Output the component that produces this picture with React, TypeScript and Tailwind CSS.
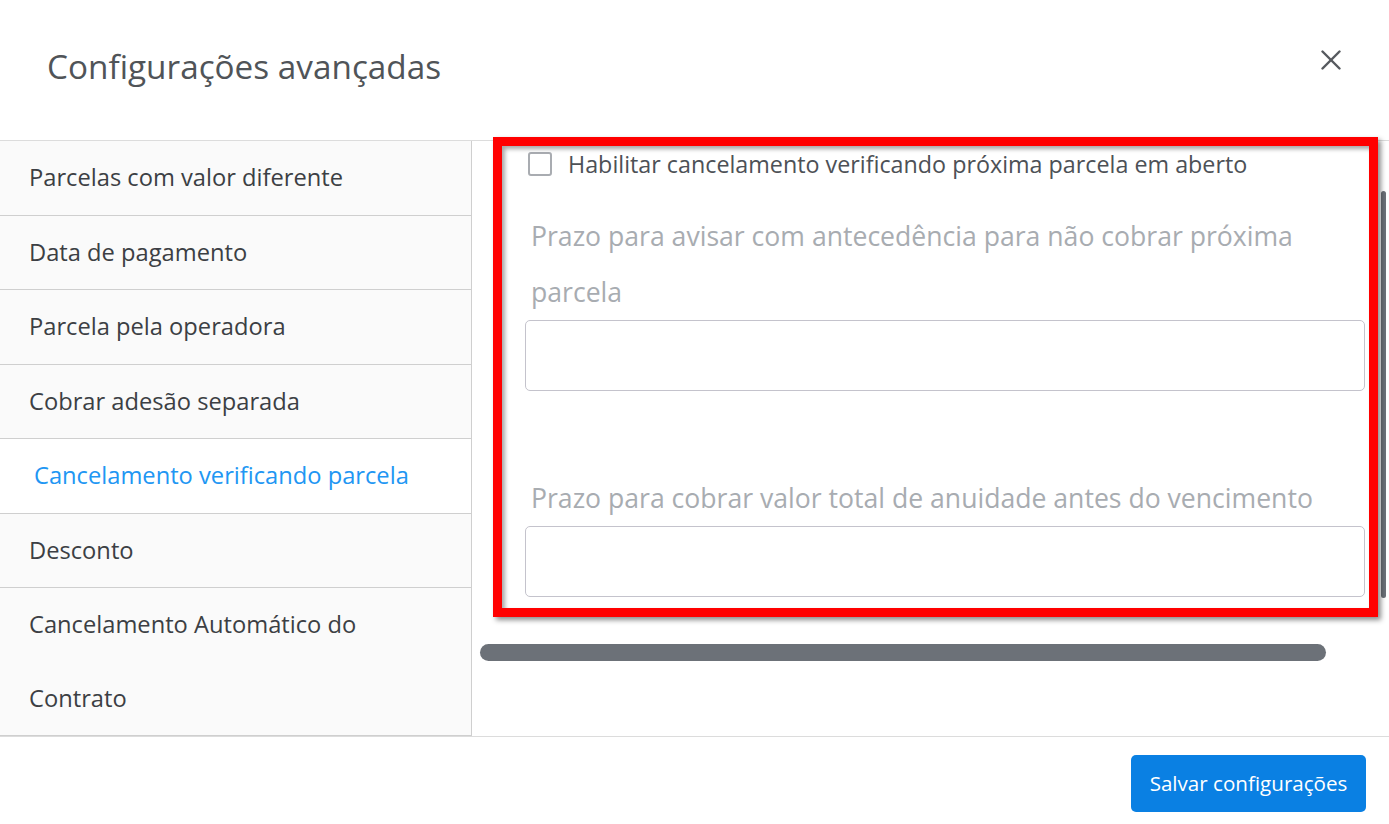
const menu = [
  { label: "Parcelas com valor diferente" },
  { label: "Data de pagamento" },
  { label: "Parcela pela operadora" },
  { label: "Cobrar adesão separada" },
  { label: "Cancelamento verificando parcela", active: true },
  { label: "Desconto" },
  { label: "Cancelamento Automático do Contrato" },
];

const App = () => {
  return (
    <div className="relative w-[1389px] h-[824px] bg-white overflow-hidden font-['Open_Sans',sans-serif]">
      <header className="h-[140px] flex items-center justify-between pl-[47px] pr-[48px]">
        <h1 className="text-[33.3px] text-[#505458] pb-[6px]">Configurações avançadas</h1>
        <button className="w-[20px] h-[20px] mb-[20px]">
          <svg viewBox="0 0 20 20" className="w-[20px] h-[20px]" stroke="#55595e" strokeWidth="2.4" strokeLinecap="round">
            <line x1="1.5" y1="1.5" x2="18.5" y2="18.5" />
            <line x1="18.5" y1="1.5" x2="1.5" y2="18.5" />
          </svg>
        </button>
      </header>

      <div className="flex h-[597px] border-t border-b border-[#dcdcdc]">
        <nav className="w-[472px] border-r border-[#cfcfcf] bg-[#fafafa]">
          {menu.map((item) => (
            <div
              key={item.label}
              className={
                item.active
                  ? "bg-white border-b border-[#cfcfcf] pl-[34px] pr-[40px] text-[23.7px] leading-[73.5px] text-[#2196f3]"
                  : "border-b border-[#cfcfcf] pl-[29px] pr-[90px] text-[23.7px] leading-[73.5px] text-[#3c3f44]"
              }
            >
              {item.label}
            </div>
          ))}
        </nav>

        <section className="relative flex-1 pl-[53px] pr-[24px]">
          <label className="flex items-center gap-[16px] mt-[11px] ml-[3px]">
            <span className="shrink-0 w-[24px] h-[24px] border-2 border-[#a9acb1] rounded-[3px]" />
            <span className="text-[23.3px] text-[#4d5156] leading-[24px] whitespace-nowrap">
              Habilitar cancelamento verificando próxima parcela em aberto
            </span>
          </label>

          <p className="mt-[32px] pl-[6px] pr-[60px] text-[26.6px] leading-[56px] text-[#a8acb1]">
            Prazo para avisar com antecedência para não cobrar próxima parcela
          </p>
          <div className="h-[71px] border border-[#c4c3cc] rounded-[5px]" />

          <p className="mt-[79px] pl-[6px] text-[26.6px] leading-[56px] text-[#a8acb1] whitespace-nowrap">
            Prazo para cobrar valor total de anuidade antes do vencimento
          </p>
          <div className="h-[71px] border border-[#c4c3cc] rounded-[5px]" />

          <div className="mt-[47px] -ml-[45px] mr-[39px] h-[17px] rounded-full bg-[#6c7178]" />

          <div className="absolute right-[3px] top-[50px] w-[5px] h-[407px] rounded-full bg-[#6c7178]" />
        </section>
      </div>

      <footer className="flex justify-end pt-[18px] pr-[23px]">
        <button className="w-[235px] h-[57px] rounded-[5px] bg-[#0a80e3] text-white text-[20.6px] font-medium">
          Salvar configurações
        </button>
      </footer>

      <div className="absolute left-[493px] top-[137px] w-[885px] h-[480px] border-[9px] border-[#ff0000] shadow-[3px_3px_5px_rgba(0,0,0,0.45),inset_3px_3px_4px_rgba(0,0,0,0.35)] pointer-events-none" />
    </div>
  );
};

export default App;
